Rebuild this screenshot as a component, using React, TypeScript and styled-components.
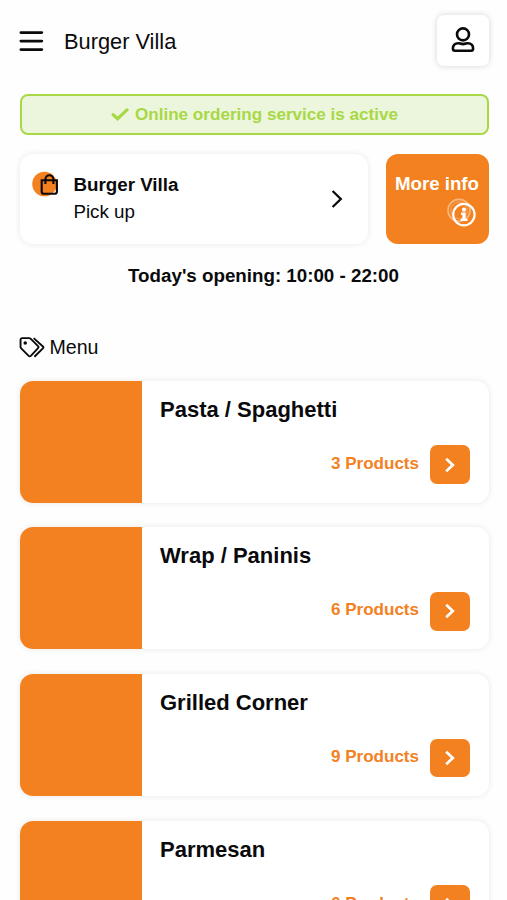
import React from "react";
import styled, { createGlobalStyle } from "styled-components";

const orange = "#f3811f";
const lime = "#a8d845";

const GlobalStyle = createGlobalStyle`
  *, *::before, *::after { box-sizing: border-box; }
  body {
    margin: 0;
    background: #fefefe;
    color: #0a0a0c;
    font-family: "Liberation Sans", Arial, sans-serif;
  }
  button { font: inherit; color: inherit; border: 0; padding: 0; }
  h1, h2, h3, p { margin: 0; }
  svg { display: block; flex: none; }
`;

const Page = styled.div`
  height: 100vh;
  overflow: hidden;
  padding: 0 18px 0 20px;
`;

const Header = styled.header`
  display: flex;
  align-items: center;
  height: 82px;
`;

const MenuButton = styled.button`
  background: none;
  margin-left: -1px;
`;

const Brand = styled.h1`
  flex: 1;
  margin-left: 20px;
  padding-top: 2px;
  font-size: 21.8px;
  font-weight: 400;
  line-height: 26px;
`;

const ProfileButton = styled.button`
  display: grid;
  place-items: center;
  width: 52px;
  height: 51px;
  margin-bottom: 2px;
  border-radius: 7px;
  background: #fff;
  box-shadow: 0 0 6px rgba(0, 0, 0, 0.17);
`;

const StatusBanner = styled.div`
  display: flex;
  align-items: center;
  justify-content: center;
  gap: 6px;
  height: 41px;
  margin-top: 12px;
  border: 2px solid ${lime};
  border-radius: 8px;
  background: #ecf6dc;
  color: ${lime};
  font-size: 17.1px;
  font-weight: 700;
`;

const StoreRow = styled.section`
  display: grid;
  grid-template-columns: 348px 103.5px;
  justify-content: space-between;
  height: 90px;
  margin-top: 18.5px;
`;

const StoreCard = styled.button`
  display: flex;
  align-items: center;
  padding: 0 23px 0 12px;
  border-radius: 13px;
  background: #fff;
  box-shadow: 0 0 6px rgba(0, 0, 0, 0.09);
  text-align: left;
`;

const StoreText = styled.div`
  flex: 1;
  margin-left: 13.4px;
  padding-bottom: 2px;
  font-size: 18.8px;
  line-height: 27px;
`;

const BagIcon = styled.svg`
  align-self: flex-start;
  margin-top: 17px;
`;

const InfoButton = styled.button`
  display: flex;
  flex-direction: column;
  align-items: flex-end;
  padding: 18px 10px 0 0;
  border-radius: 12px;
  background: ${orange};
  color: #fff;
  font-size: 18.7px;
  font-weight: 700;
  line-height: 24px;
  white-space: nowrap;
`;

const InfoIcon = styled.svg`
  margin: 1px 3px 0 0;
`;

const Hours = styled.p`
  margin: 19.5px -18px 0 0;
  text-align: center;
  font-size: 18.75px;
  font-weight: 700;
  line-height: 26px;
`;

const SectionTitle = styled.h2`
  display: flex;
  align-items: center;
  gap: 4.5px;
  height: 26px;
  margin-top: 45px;
  margin-left: -1px;
  font-size: 19.6px;
  font-weight: 400;
`;

const CategoryList = styled.div`
  display: flex;
  flex-direction: column;
  gap: 24.5px;
  margin-top: 20.5px;
`;

const CategoryCard = styled.article`
  display: flex;
  flex: none;
  height: 122.2px;
  border-radius: 13px;
  background: #fff;
  box-shadow: 0 0 6px rgba(0, 0, 0, 0.09);
  overflow: hidden;
`;

const Thumbnail = styled.div`
  width: 122px;
  background: ${orange};
`;

const CategoryBody = styled.div`
  display: flex;
  flex: 1;
  flex-direction: column;
  justify-content: space-between;
  padding: 16.2px 19px 18.8px 18px;
`;

const CategoryName = styled.h3`
  font-size: 22px;
  font-weight: 700;
  line-height: 26px;
`;

const CategoryAction = styled.div`
  display: flex;
  align-items: center;
  justify-content: flex-end;
  gap: 11px;
  color: ${orange};
  font-size: 17.05px;
  font-weight: 700;
`;

const ProductCount = styled.span`
  padding-bottom: 2px;
`;

const OpenButton = styled.button`
  display: grid;
  place-items: center;
  width: 40px;
  height: 38.5px;
  border-radius: 7px;
  background: ${orange};
  color: #fff;
`;

const categories = [
  { name: "Pasta / Spaghetti", count: 3 },
  { name: "Wrap / Paninis", count: 6 },
  { name: "Grilled Corner", count: 9 },
  { name: "Parmesan", count: 6 },
];

export default function App() {
  return (
    <Page>
      <GlobalStyle />
      <Header>
        <MenuButton aria-label="Open menu">
          <svg width="25" height="22" viewBox="0 0 25 22" stroke="currentColor" strokeWidth="2.8" strokeLinecap="round">
            <path d="M1.9 2.6h20.9M1.9 11.1h20.9M1.9 19.6h20.9" />
          </svg>
        </MenuButton>
        <Brand>Burger Villa</Brand>
        <ProfileButton aria-label="Account">
          <svg width="24" height="26" viewBox="0 0 24 26" fill="none" stroke="currentColor" strokeWidth="2.6">
            <circle cx="12" cy="7.4" r="6" />
            <path d="M7.2 16.2C3.8 16.2 1.9 18.5 1.9 21.5c0 1.5.8 2.2 2.1 2.2h16c1.3 0 2.1-.7 2.1-2.2 0-3-1.9-5.3-5.3-5.3-1.5 0-2.8.9-4.8.9s-3.3-.9-4.8-.9z" />
          </svg>
        </ProfileButton>
      </Header>

      <StatusBanner>
        <svg width="18" height="14" viewBox="0 0 18 14" fill="none" stroke="currentColor" strokeWidth="3.2" strokeLinecap="round">
          <path d="M2.2 6.7l4.4 4L16 1.9" />
        </svg>
        Online ordering service is active
      </StatusBanner>

      <StoreRow>
        <StoreCard>
          <BagIcon width="28" height="26" viewBox="0 0 28 26" fill="none">
            <circle cx="12.5" cy="13" r="12.3" fill={orange} />
            <g stroke="currentColor" strokeWidth="2.1">
              <path d="M9.7 9.3h15.2v11.2c0 1.6-.7 2.3-2.3 2.3H12c-1.6 0-2.3-.7-2.3-2.3z" />
              <path d="M13.4 13V8.3a4 4 0 0 1 8 0V13" />
            </g>
          </BagIcon>
          <StoreText>
            <strong>Burger Villa</strong>
            <p>Pick up</p>
          </StoreText>
          <svg width="16" height="20" viewBox="0 0 16 20" fill="none" stroke="currentColor" strokeWidth="2.3">
            <path d="M3.6 2l8.2 8-8.2 8" />
          </svg>
        </StoreCard>
        <InfoButton>
          More info
          <InfoIcon width="30" height="30" viewBox="0 0 30 30" fill="none">
            <circle cx="13" cy="13.4" r="11" stroke="#fff" strokeOpacity=".42" strokeWidth="1.7" />
            <circle cx="13" cy="13.4" r="8.3" stroke="#fff" strokeOpacity=".2" strokeWidth="1.5" />
            <circle cx="17.9" cy="17.6" r="10.7" stroke="#fff" strokeWidth="2.2" />
            <circle cx="18" cy="12.7" r="2.1" fill="#fff" />
            <path d="M15 15.6h4.7v6.2h1.8v2.3h-6.9v-2.3h1.8v-3.9H15z" fill="#fff" />
          </InfoIcon>
        </InfoButton>
      </StoreRow>

      <Hours>Today's opening: 10:00 - 22:00</Hours>

      <SectionTitle>
        <svg width="26" height="21" viewBox="0 0 25 20" fill="none" stroke="currentColor" strokeWidth="1.8" strokeLinejoin="round">
          <path d="M1.5 2.6c0-1 .6-1.6 1.6-1.6h6.7c.5 0 .9.2 1.3.5l7.2 7.1c.7.7.7 1.3 0 2l-6.9 7.4c-.7.7-1.4.7-2.1 0L2.1 10.9c-.4-.4-.6-.8-.6-1.3z" />
          <path d="M14.1 1l8.9 8c.6.6.6 1.2 0 1.8l-8.2 8.1" />
          <circle cx="6" cy="5.6" r="1.7" fill="currentColor" stroke="none" />
        </svg>
        Menu
      </SectionTitle>

      <CategoryList>
        {categories.map(({ name, count }) => (
          <CategoryCard key={name}>
            <Thumbnail />
            <CategoryBody>
              <CategoryName>{name}</CategoryName>
              <CategoryAction>
                <ProductCount>{count} Products</ProductCount>
                <OpenButton aria-label={`Open ${name}`}>
                  <svg width="12" height="16" viewBox="0 0 12 16" fill="none" stroke="currentColor" strokeWidth="2.7">
                    <path d="M2.2 1.8L8.8 8l-6.6 6.2" />
                  </svg>
                </OpenButton>
              </CategoryAction>
            </CategoryBody>
          </CategoryCard>
        ))}
      </CategoryList>
    </Page>
  );
}
